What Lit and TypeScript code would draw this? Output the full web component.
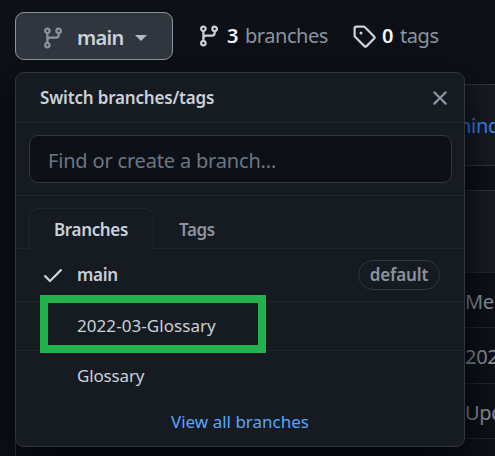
import { LitElement, html, css, svg } from "lit";
import { customElement } from "lit/decorators.js";

const branchPath = "M11.75 2.5a.75.75 0 100 1.5.75.75 0 000-1.5zm-2.25.75a2.25 2.25 0 113 2.122V6A2.5 2.5 0 0110 8.5H6a1 1 0 00-1 1v1.128a2.251 2.251 0 11-1.5 0V5.372a2.25 2.25 0 111.5 0v1.836A2.492 2.492 0 016 7h4a1 1 0 001-1v-.628A2.25 2.25 0 019.5 3.25zM4.25 12a.75.75 0 100 1.5.75.75 0 000-1.5zM3.5 3.25a.75.75 0 111.5 0 .75.75 0 01-1.5 0z";
const tagPath = "M2.5 7.775V2.75a.25.25 0 01.25-.25h5.025a.25.25 0 01.177.073l6.25 6.25a.25.25 0 010 .354l-5.025 5.025a.25.25 0 01-.354 0l-6.25-6.25a.25.25 0 01-.073-.177zm-1.5 0V2.75C1 1.784 1.784 1 2.75 1h5.025c.464 0 .91.184 1.238.513l6.25 6.25a1.75 1.75 0 010 2.474l-5.026 5.026a1.75 1.75 0 01-2.474 0l-6.25-6.25A1.75 1.75 0 011 7.775zM6 5a1 1 0 100 2 1 1 0 000-2z";
const closePath = "M3.72 3.72a.75.75 0 011.06 0L8 6.94l3.22-3.22a.75.75 0 111.06 1.06L9.06 8l3.22 3.22a.75.75 0 11-1.06 1.06L8 9.06l-3.22 3.22a.75.75 0 01-1.06-1.06L6.94 8 3.72 4.78a.75.75 0 010-1.06z";
const checkPath = "M13.78 4.22a.75.75 0 010 1.06l-7.25 7.25a.75.75 0 01-1.06 0L2.22 9.28a.75.75 0 011.06-1.06L6 10.94l6.72-6.72a.75.75 0 011.06 0z";

const icon = (d: string) => html`<svg class="icon" viewBox="0 0 16 16" aria-hidden="true">${svg`<path fill="currentColor" fill-rule="evenodd" d=${d}></path>`}</svg>`;

@customElement("branch-menu")
export class BranchMenu extends LitElement {
  static styles = css`
    :host { display: flex; flex-direction: column; box-sizing: border-box; width: 450px; height: 375px;
      border: 1px solid #30363d; border-radius: 9px; background: #161b22; color: #c9d1d9;
      box-shadow: 0 12px 36px #010409; font-size: 17px; line-height: 24px; }
    .icon { width: 24px; height: 24px; display: block; flex: none; }
    .header { display: flex; align-items: center; justify-content: space-between; box-sizing: border-box;
      height: 50px; padding: 0 12px 0 24px; border-bottom: 1px solid #21262d; font-weight: 600; }
    .title { letter-spacing: -0.18px; }
    .close { color: #8b949e; }
    .filter { box-sizing: border-box; height: 73px; padding: 12px 12px 12px 13px; border-bottom: 1px solid #21262d; }
    .input { box-sizing: border-box; height: 48px; border: 1px solid #30363d; border-radius: 9px; background: #0d1117;
      padding-left: 18px; line-height: 49px; font-size: 20px; color: #6e7681; letter-spacing: -0.18px; }
    .tabs { display: flex; box-sizing: border-box; height: 53px; padding: 12px 0 0 13px; box-shadow: inset 0 -1px #21262d; }
    .tab { box-sizing: border-box; width: 125px; border: 1px solid transparent; border-bottom: 0;
      padding: 9px 0 0 24px; font-weight: 600; letter-spacing: -0.35px; color: #8b949e; }
    .tab.on { border-color: #21262d; border-radius: 9px 9px 0 0; background: #161b22; color: #c9d1d9; }
    .row { display: flex; align-items: center; box-sizing: border-box; height: 49px; padding: 0 24px 0 25px;
      border-bottom: 1px solid #21262d; gap: 12px; letter-spacing: 0.06px; }
    .row.current { height: 53px; font-weight: 600; letter-spacing: -0.3px; }
    .row.last { border-color: transparent; height: 51px; letter-spacing: -0.15px; }
    .mark { width: 24px; height: 24px; }
    .name { flex: 1; }
    .pill { box-sizing: border-box; width: 82px; height: 30px; border: 1px solid #30363d; border-radius: 15px;
      line-height: 28px; text-align: center; color: #8b949e; letter-spacing: -0.1px; }
    .all { text-align: center; padding-top: 8px; color: #58a6ff; }
  `;
  render() {
    return html`
      <div class="header"><span class="title">Switch branches/tags</span><span class="close">${icon(closePath)}</span></div>
      <div class="filter"><div class="input">Find or create a branch...</div></div>
      <div class="tabs"><div class="tab on">Branches</div><div class="tab">Tags</div></div>
      <div class="row current"><span class="mark">${icon(checkPath)}</span><span class="name">main</span><span class="pill">default</span></div>
      <div class="row"><span class="mark"></span><span class="name">2022-03-Glossary</span></div>
      <div class="row last"><span class="mark"></span><span class="name">Glossary</span></div>
      <div class="all">View all branches</div>
    `;
  }
}

@customElement("app-root")
export class AppRoot extends LitElement {
  static styles = css`
    :host { display: block; position: relative; width: 495px; height: 456px; overflow: hidden; background: #0d1117;
      color: #c9d1d9; font-family: "Noto Sans", "Open Sans", sans-serif; font-size: 20px; line-height: 30px; }
    .icon { width: 24px; height: 24px; display: block; flex: none; }
    .toolbar { display: flex; height: 84px; padding-left: 15px; align-items: flex-start; }
    .button { position: relative; z-index: 2; display: flex; align-items: center; box-sizing: border-box; width: 158px; height: 48px;
      margin-top: 12px; padding: 3px 0 0 25px; border: 1px solid #8b949e; border-radius: 9px; background: #30363d;
      font-weight: 600; }
    .button .icon { color: #8b949e; }
    .label { width: 46px; margin: 1px 12px 0 12px; letter-spacing: -0.7px; }
    .caret { border: 6px solid transparent; border-top-color: #b1bac4; border-bottom: 0; }
    .stat { position: relative; z-index: 2; display: flex; align-items: center; margin-top: 21px; color: #8b949e; }
    .branches { margin-left: 24px; width: 155px; }
    .stat .icon { color: #c9d1d9; }
    .count { color: #f0f6fc; font-weight: 600; margin: 0 7px 0 6px; width: 11px; }
    .noun { letter-spacing: -0.45px; }
    .notice { box-sizing: border-box; margin: 0 -20px 0 15px; height: 82px; border: 1px solid #30363d; background: #161b22;
      color: #388bfd; padding: 26px 0 0 400px; letter-spacing: -0.3px; }
    .files { margin: 24px -20px 0 15px; border: 1px solid #30363d; border-bottom: 0; height: 270px; }
    .commit { height: 81px; background: #161b22; border-bottom: 1px solid #21262d; }
    .file { box-sizing: border-box; height: 55.3px; padding: 14px 0 0 449px; border-bottom: 1px solid #21262d; color: #8b949e; letter-spacing: -0.3px; }
    branch-menu { position: absolute; z-index: 1; left: 15px; top: 72px; }
    .highlight { position: absolute; z-index: 3; box-sizing: border-box; left: 40px; top: 295px; width: 226px; height: 58px; border: 8px solid #22b14c; }
  `;
  render() {
    return html`
      <div class="toolbar">
        <div class="button">${icon(branchPath)}<span class="label">main</span><span class="caret"></span></div>
        <div class="stat branches">${icon(branchPath)}<span class="count">3</span><span class="noun">branches</span></div>
        <div class="stat">${icon(tagPath)}<span class="count">0</span><span class="noun">tags</span></div>
      </div>
      <div class="notice">... behind</div>
      <div class="files">
        <div class="commit"></div>
        <div class="file">Merge</div>
        <div class="file">2022</div>
        <div class="file">Update</div>
      </div>
      <branch-menu></branch-menu>
      <div class="highlight"></div>
    `;
  }
}
